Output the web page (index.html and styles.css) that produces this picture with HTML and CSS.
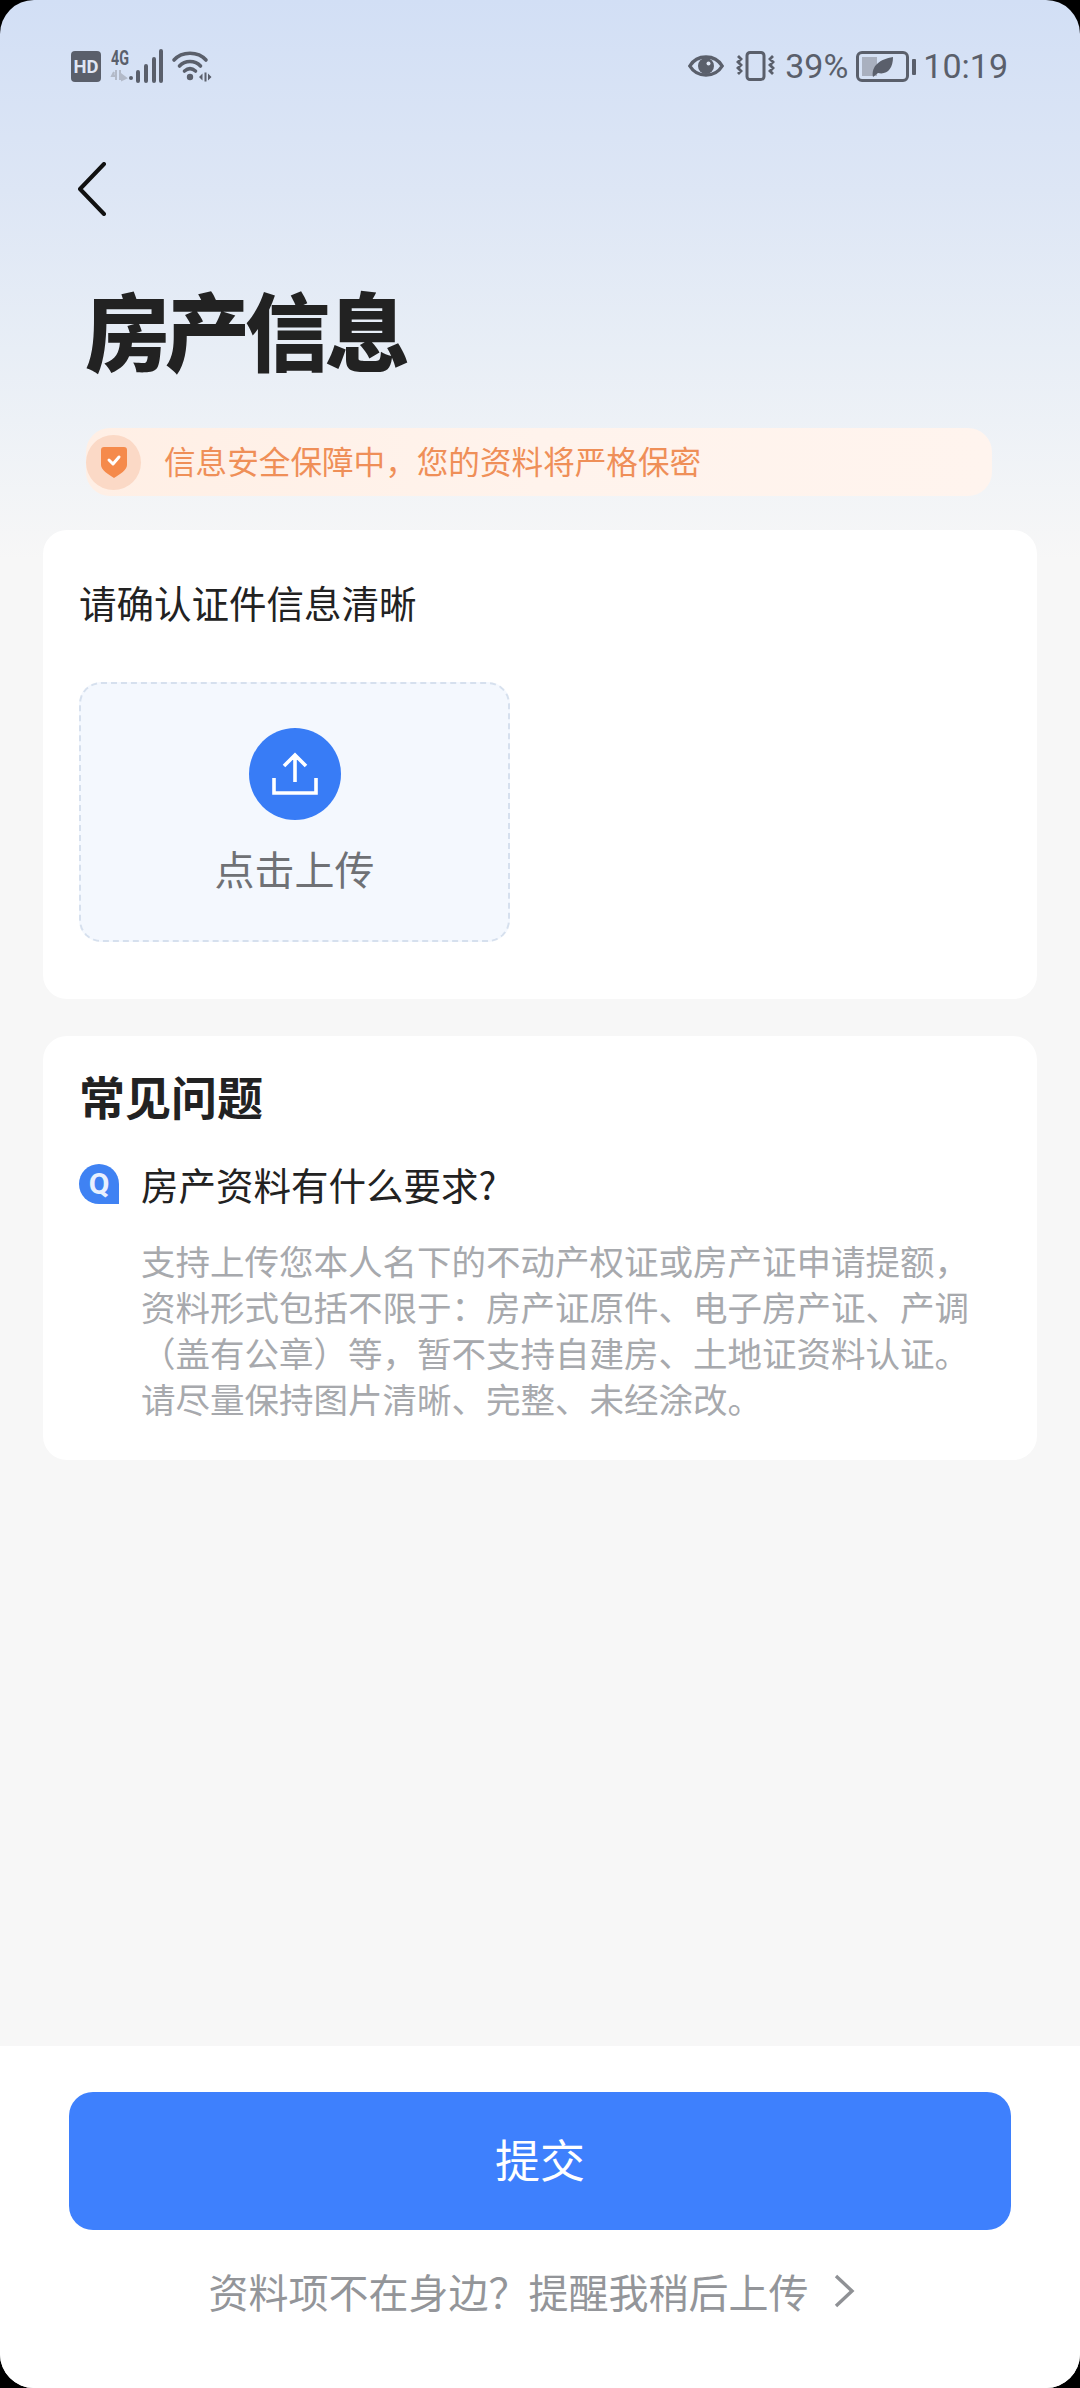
FILE: index.html
```html
<!DOCTYPE html>
<html>
	<head>
		<meta charset="UTF-8">
		<meta name="viewport" content="width=device-width,initial-scale=1">
		<title>房产信息</title>
		<link rel="stylesheet" href="styles.css">
	</head>
	<body>
		<div class="screen">

			<!--状态栏-->
			<div class="status">
				<div class="status-left">
					<svg class="ic-hd" width="30" height="31" viewBox="0 0 30 31">
						<rect width="30" height="31" rx="4" fill="#5a5f6b"/>
						<text x="15" y="22" text-anchor="middle" font-size="19" font-weight="700" font-family="Roboto" fill="#dfe6f4" textLength="25" lengthAdjust="spacingAndGlyphs">HD</text>
					</svg>
					<svg class="ic-signal" width="52" height="32" viewBox="0 0 52 32">
						<text x="0" y="15" font-size="20" font-weight="700" font-family="Roboto" fill="#5a5f6b" textLength="18" lengthAdjust="spacingAndGlyphs">4G</text>
						<path d="M5 20v10M3 22l-2 4h3M9 20v10M11 25l4 3-4 2z" stroke="#b3bac8" stroke-width="2" fill="#b3bac8"/>
						<circle cx="20" cy="28" r="2" fill="#5a5f6b"/>
						<path d="M27 21v9M35 15v15M43 8v22M50 0v30" transform="translate(0,1)" stroke="#5a5f6b" stroke-width="4" stroke-linecap="round" fill="none"/>
					</svg>
					<svg class="ic-wifi" width="40" height="32" viewBox="0 0 40 32">
						<path d="M2 10C10 1 26 1 34 10M7.500 16C13 10 23 10 28.500 16M12.500 21C16 18 20 18 23.500 21" stroke="#5a5f6b" stroke-width="3.600" stroke-linecap="round" fill="none"/>
						<circle cx="18" cy="27" r="3.200" fill="#5a5f6b"/>
						<path d="M27 27l3.500-3.500v7zM32.500 22.500h2v9h-2zM36 23.500l3.500 3.500-3.500 3.500z" fill="#5a5f6b"/>
					</svg>
				</div>
				<div class="status-right">
					<svg class="ic-eye" width="36" height="28" viewBox="0 0 36 28">
						<path d="M1.800 14C9 2 27 2 34.200 14 27 26 9 26 1.800 14z" stroke="#5a5f6b" stroke-width="3.400" fill="none"/>
						<circle cx="18" cy="14" r="8" fill="#5a5f6b"/>
						<circle cx="20.500" cy="11.500" r="2" fill="#dfe6f4"/>
					</svg>
					<svg class="ic-vib" width="39" height="30" viewBox="0 0 39 30">
						<rect x="11" y="1.500" width="17" height="27" rx="3" stroke="#5a5f6b" stroke-width="3" fill="none"/>
						<path d="M2 5l3 3-3 3 3 3-3 3 3 3-3 3M37 5l-3 3 3 3-3 3 3 3-3 3 3 3" stroke="#5a5f6b" stroke-width="2.800" fill="none"/>
					</svg>
					<span class="status-txt pct">39%</span>
					<svg class="ic-batt" width="60" height="31" viewBox="0 0 60 31">
						<rect x="1.500" y="1.500" width="50" height="28" rx="4.500" stroke="#5a5f6b" stroke-width="3" fill="none"/>
						<rect x="6" y="6" width="15" height="19" fill="#a9b0bf"/>
						<path d="M17 26C15 15 24 8 37 6 37 18 31 24 22 22L17 26z" fill="#5a5f6b"/>
						<rect x="56" y="8" width="4" height="16" rx="1" fill="#5a5f6b"/>
					</svg>
					<span class="status-txt time">10:19</span>
				</div>
			</div>

			<!--返回-->
			<div class="nav">
				<svg width="30" height="54" viewBox="0 0 30 54">
					<path d="M27 2L3 27l24 25" stroke="#111" stroke-width="4" stroke-linecap="round" stroke-linejoin="round" fill="none"/>
				</svg>
			</div>

			<h1 class="title">房产信息</h1>

			<div class="notice">
				<span class="notice-ic">
					<svg width="26" height="32" viewBox="0 0 26 32">
						<path d="M3 1h20a3 3 0 0 1 3 3v15c0 5-7 9-13 13C7 28 0 24 0 19V4a3 3 0 0 1 3-3z" fill="#f58a4b"/>
						<path d="M8 14l4 4 6-7" stroke="#fff" stroke-width="3" stroke-linecap="round" stroke-linejoin="round" fill="none"/>
					</svg>
				</span>
				<span class="notice-txt">信息安全保障中，您的资料将严格保密</span>
			</div>

			<!--上传-->
			<div class="card card-up">
				<p class="up-tip">请确认证件信息清晰</p>
				<div class="up-box">
					<span class="up-ic">
						<svg width="46" height="44" viewBox="0 0 46 44">
							<path d="M23 30V3M12 14L23 3l11 11M2 26v15h42V26" stroke="#fff" stroke-width="3.600" fill="none"/>
						</svg>
					</span>
					<span class="up-txt">点击上传</span>
				</div>
			</div>

			<!--常见问题-->
			<div class="card card-faq">
				<h2 class="faq-title">常见问题</h2>
				<div class="faq-q">
					<span class="q-ic">Q</span>
					<span class="q-txt">房产资料有什么要求?</span>
				</div>
				<p class="faq-a">支持上传您本人名下的不动产权证或房产证申请提额，资料形式包括不限于：房产证原件、电子房产证、产调（盖有公章）等，暂不支持自建房、土地证资料认证。请尽量保持图片清晰、完整、未经涂改。</p>
			</div>

			<!--底部-->
			<div class="footer">
				<div class="btn">提交</div>
				<div class="later">
					<span>资料项不在身边？提醒我稍后上传</span>
					<svg width="22" height="34" viewBox="0 0 22 34">
						<path d="M3 2l16 15L3 32" stroke="#8f9195" stroke-width="3.400" fill="none"/>
					</svg>
				</div>
			</div>
		</div>
	</body>
</html>
```

FILE: styles.css
```css
*{
	margin:0;
	padding:0;
	box-sizing:border-box;
}

html,body{
	width:1080px;
	height:2388px;
	background:#000;
	overflow:hidden;
}
body{
	font-family:"Noto Sans CJK SC","Noto Sans",sans-serif;
}

.screen{
	width:1080px;
	height:2388px;
	display:flex;
	flex-direction:column;
	border-radius:34px;
	overflow:hidden;
	background:linear-gradient(180deg,#d2dff5 0,#dde6f5 190px,#e8eef6 350px,#f7f7f7 560px);
}

/* status bar */
.status{
	display:flex;
	justify-content:space-between;
	align-items:center;
	height:32px;
	margin-top:50px;
	padding:0 72px 0 71px;
}
.status-left,.status-right{
	display:flex;
	align-items:center;
}
.status svg{overflow:visible;}
.ic-signal{margin-left:10px;}
.ic-wifi{margin-left:9px;}
.ic-vib{margin-left:12px;}
.status-txt{
	font-family:Roboto,sans-serif;
	font-size:34px;
	line-height:32px;
	color:#5a5f6b;
}
.pct{margin-left:10px;}
.ic-batt{margin-left:8px;}
.time{margin-left:7px;}

.nav{
	height:54px;
	margin-top:80px;
	padding-left:77px;
}

.title{
	margin:62px 0 0 85px;
	height:100px;
	font-size:85px;
	line-height:100px;
	font-weight:900;
	letter-spacing:-5px;
	color:#222;
}

.notice{
	display:flex;
	align-items:center;
	width:906px;
	height:68px;
	margin:50px 0 0 86px;
	border-radius:24px;
	background:linear-gradient(90deg,#ffefe5,#fff3ec 50%,#fff4ee);
}
.notice-ic{
	display:flex;
	align-items:center;
	justify-content:center;
	width:55px;
	height:55px;
	border-radius:50%;
	background:#fbd9c6;
}
.notice-txt{
	margin-left:23px;
	padding-bottom:5px;
	font-size:31.600px;
	color:#ef8f58;
}

.card{
	margin:0 43px;
	border-radius:24px;
	background:#fff;
}
.card-up{
	height:469px;
	margin-top:34px;
	padding:46px 36px 0;
}
.up-tip{
	font-size:37.500px;
	line-height:52px;
	color:#222;
	white-space:nowrap;
}
.up-box{
	display:flex;
	flex-direction:column;
	align-items:center;
	width:431px;
	height:260px;
	margin-top:54px;
	padding-top:44px;
	border:2px dashed #d6e0ee;
	border-radius:22px;
	background:#f4f8fe;
}
.up-ic{
	display:flex;
	align-items:center;
	justify-content:center;
	width:92px;
	height:92px;
	border-radius:50%;
	background:#387cf6;
}
.up-txt{
	margin-top:20px;
	font-size:40px;
	line-height:56px;
	color:#6f7175;
}

.card-faq{
	height:424px;
	margin-top:37px;
	padding:28px 36px 0;
}
.faq-title{
	font-size:46px;
	line-height:62px;
	font-weight:700;
	color:#222;
}
.faq-q{
	display:flex;
	align-items:center;
	margin-top:36px;
}
.q-ic{
	width:40px;
	height:40px;
	border-radius:50% 50% 0 50%;
	background:#3f82f3;
	color:#e8f0fe;
	font-family:Roboto,sans-serif;
	font-size:30px;
	font-weight:700;
	line-height:40px;
	text-align:center;
}
.q-txt{
	margin-left:22px;
	font-size:37.500px;
	line-height:44px;
	color:#222;
}
.faq-a{
	width:850px;
	margin:31px 0 0 62px;
	font-size:34.500px;
	line-height:46px;
	color:#a7a9ad;
}

.footer{
	margin-top:auto;
	height:342px;
	padding:46px 69px 0;
	background:#fff;
}
.btn{
	height:138px;
	border-radius:24px;
	background:#3e80fd;
	color:#fff;
	font-size:45px;
	line-height:134px;
	text-align:center;
}
.later{
	display:flex;
	align-items:center;
	justify-content:center;
	height:48px;
	margin-top:37px;
	padding-right:17px;
	font-size:40px;
	line-height:48px;
	color:#939599;
}
.later svg{
	margin-left:24px;
}
```
